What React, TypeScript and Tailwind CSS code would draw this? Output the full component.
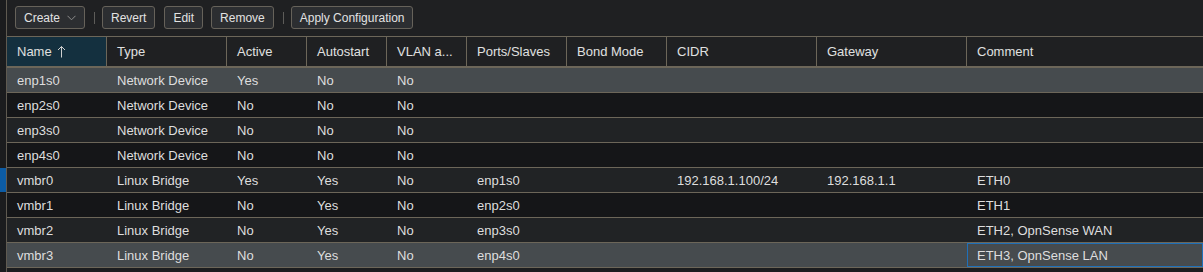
import React from "react";

type Row = {
  name: string;
  type: string;
  active: string;
  autostart: string;
  vlan: string;
  ports: string;
  bond: string;
  cidr: string;
  gateway: string;
  comment: string;
};

const rows: Row[] = [
  { name: "enp1s0", type: "Network Device", active: "Yes", autostart: "No", vlan: "No", ports: "", bond: "", cidr: "", gateway: "", comment: "" },
  { name: "enp2s0", type: "Network Device", active: "No", autostart: "No", vlan: "No", ports: "", bond: "", cidr: "", gateway: "", comment: "" },
  { name: "enp3s0", type: "Network Device", active: "No", autostart: "No", vlan: "No", ports: "", bond: "", cidr: "", gateway: "", comment: "" },
  { name: "enp4s0", type: "Network Device", active: "No", autostart: "No", vlan: "No", ports: "", bond: "", cidr: "", gateway: "", comment: "" },
  { name: "vmbr0", type: "Linux Bridge", active: "Yes", autostart: "Yes", vlan: "No", ports: "enp1s0", bond: "", cidr: "192.168.1.100/24", gateway: "192.168.1.1", comment: "ETH0" },
  { name: "vmbr1", type: "Linux Bridge", active: "No", autostart: "Yes", vlan: "No", ports: "enp2s0", bond: "", cidr: "", gateway: "", comment: "ETH1" },
  { name: "vmbr2", type: "Linux Bridge", active: "No", autostart: "Yes", vlan: "No", ports: "enp3s0", bond: "", cidr: "", gateway: "", comment: "ETH2, OpnSense WAN" },
  { name: "vmbr3", type: "Linux Bridge", active: "No", autostart: "Yes", vlan: "No", ports: "enp4s0", bond: "", cidr: "", gateway: "", comment: "ETH3, OpnSense LAN" },
];

const headers = ["Name", "Type", "Active", "Autostart", "VLAN a...", "Ports/Slaves", "Bond Mode", "CIDR", "Gateway", "Comment"];

const gridCols = "grid grid-cols-[100px_120px_80px_80px_80px_100px_100px_150px_150px_1fr]";

function Btn({ children }: { children: React.ReactNode }) {
  return (
    <button className="h-[23px] px-2 flex items-center rounded-[3px] border border-[#66625a] bg-[#2c2e31] text-[12px] text-[#e2e2e2] leading-none">
      {children}
    </button>
  );
}

function Sep() {
  return <div className="w-px h-[12px] bg-[#5d5c59] mx-[7px]" />;
}

export default function App() {
  return (
    <div
      className="w-[1203px] h-[272px] bg-[#1c1d1f] flex overflow-hidden"
      style={{ fontFamily: '"Liberation Sans", Arial, sans-serif' }}
    >
      <div className="w-[7px] shrink-0 border-r border-[#5f5a51] bg-[#1b1c1e] flex flex-col">
        <div className="h-[168px]" />
        <div className="h-[24px] w-[6px] bg-[#0c5ca5]" />
      </div>
      <div className="flex-1 flex flex-col bg-[#1f2022]">
        <div className="h-[37px] flex items-center pl-[8px] pb-px border-b border-[#6c6659] shrink-0">
          <button className="h-[23px] pl-2 pr-[8px] flex items-center rounded-[3px] border border-[#66625a] bg-[#2c2e31] text-[12px] text-[#e2e2e2] leading-none">
            Create
            <svg width="9" height="6" viewBox="0 0 9 6" className="ml-[7px]" fill="none">
              <path d="M0.5 0.8 L4.5 4.8 L8.5 0.8" stroke="#8d8d8d" strokeWidth="1" />
            </svg>
          </button>
          <div className="ml-[2px]" />
          <Sep />
          <Btn>Revert</Btn>
          <div className="w-[9px]" />
          <Btn>Edit</Btn>
          <div className="w-[8px]" />
          <Btn>Remove</Btn>
          <div className="w-[2px]" />
          <Sep />
          <Btn>Apply Configuration</Btn>
        </div>
        <div className={`${gridCols} h-[31px] border-b-2 border-[#6c6659] shrink-0`}>
          {headers.map((h, i) => (
            <div
              key={h}
              className={`flex items-center pl-[10px] text-[13px] text-[#e0e0e0] ${
                i < headers.length - 1 ? "border-r border-[#6c6659]" : ""
              } ${i === 0 ? "bg-[#14303f]" : ""}`}
            >
              {h}
              {i === 0 && (
                <svg width="9" height="13" viewBox="0 0 9 13" className="ml-[5px]" fill="none">
                  <path d="M4.5 1.5 V12.5 M1 5 L4.5 1.5 L8 5" stroke="#d0d0d0" strokeWidth="1" />
                </svg>
              )}
            </div>
          ))}
        </div>
        <div className="flex flex-col">
          {rows.map((r, idx) => {
            const selected = idx === 0 || idx === 7;
            const bg = selected ? "bg-[#464b4e]" : idx % 2 === 1 ? "bg-[#151618]" : "bg-[#212325]";
            const cells = [r.name, r.type, r.active, r.autostart, r.vlan, r.ports, r.bond, r.cidr, r.gateway, r.comment];
            return (
              <div key={r.name} className={`${gridCols} h-[25px] border-b border-[#6c6659] ${bg}`}>
                {cells.map((c, ci) => (
                  <div
                    key={ci}
                    className={`flex items-center pl-[10px] pt-px text-[13px] text-[#dedede] whitespace-nowrap ${
                      idx === 7 && ci === 9 ? "outline outline-1 -outline-offset-1 outline-[#1f70b9]" : ""
                    }`}
                  >
                    {c}
                  </div>
                ))}
              </div>
            );
          })}
        </div>
        <div className="flex-1 bg-[#1c1d1f]" />
      </div>
    </div>
  );
}
